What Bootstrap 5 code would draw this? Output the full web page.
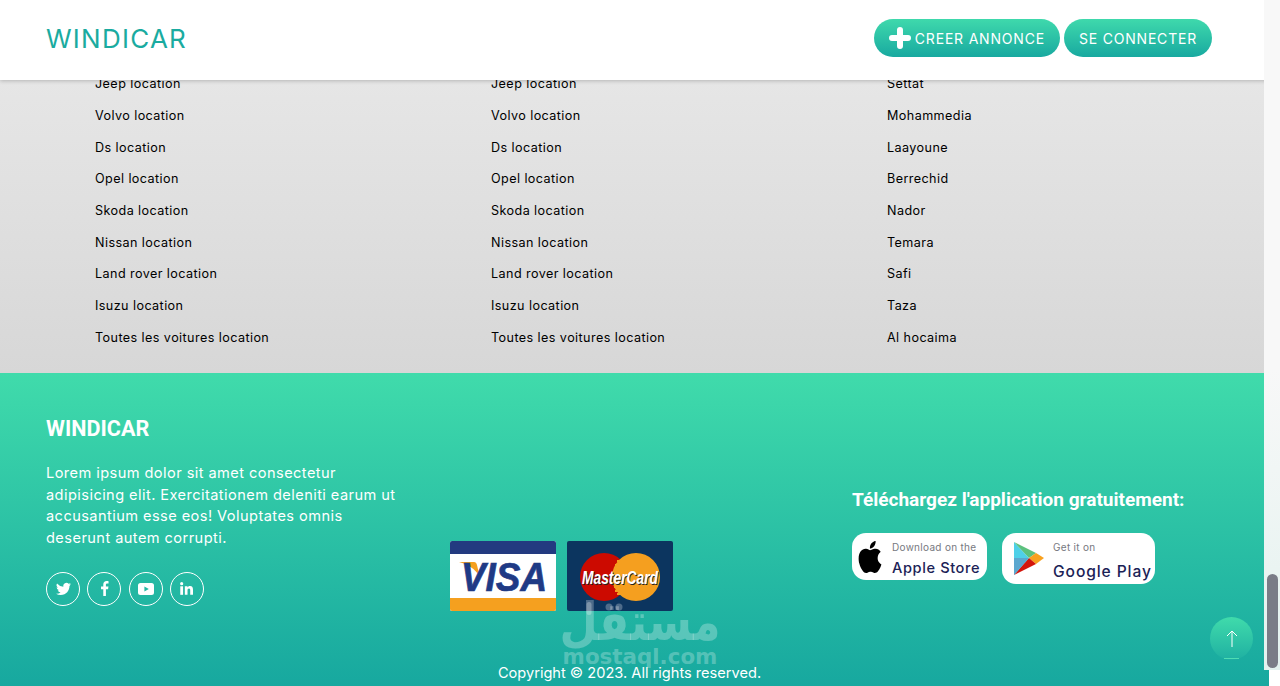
<!DOCTYPE html>
<html lang="fr">
<head>
  <meta charset="UTF-8" />
  <meta name="viewport" content="width=device-width, initial-scale=1.0" />
  <title>Windicar</title>
  <link href="https://cdn.jsdelivr.net/npm/bootstrap@5.3.2/dist/css/bootstrap.min.css" rel="stylesheet">
  <style>
    html, body {
      height: 686px;
      overflow: hidden;
      background-color: #fff;
    }
    body {
      font-family: Inter, "Liberation Sans", sans-serif;
    }
    .page-wrap {
      position: relative;
      width: 1269px;
      height: 686px;
    }
    .top-bar {
      position: relative;
      z-index: 5;
      height: 80px;
      padding: 0 57px 4px 46px;
      background-color: #fff;
      box-shadow: 0 1px 4px rgba(0, 0, 0, 0.22);
    }
    .brand-name {
      padding: 0;
      margin: 1px 0 0;
      font-size: 26px;
      letter-spacing: 1.25px;
      color: #1aaba0;
    }
    .pill-btn {
      height: 38px;
      padding: 0 15px;
      font-size: 14px;
      letter-spacing: 0.8px;
      color: #fff;
      border: 0;
      background: linear-gradient(#3fd9ac, #18a9a0);
    }
    .grey-zone {
      height: 293px;
      background: linear-gradient(#e6e6e6, #d7d7d7);
      padding-left: 95px;
      overflow: hidden;
    }
    .link-grid {
      display: grid;
      grid-template-columns: repeat(3, 396px);
      margin-top: -11.7px;
    }
    .link-grid li {
      height: 31.7px;
      line-height: 31.7px;
      font-size: 12.6px;
      letter-spacing: 0.42px;
      color: #000;
      white-space: nowrap;
    }
    .site-foot {
      position: relative;
      height: 313px;
      color: #fff;
      background: linear-gradient(#40dbab, #17a89f);
    }
    .foot-cols {
      display: grid;
      grid-template-columns: 404px 402px 1fr;
      height: 287px;
      padding-left: 46px;
    }
    .about-col {
      padding-top: 42px;
    }
    .foot-title {
      margin: 0 0 21px;
      font-family: Roboto, sans-serif;
      font-weight: 700;
      font-size: 21.6px;
      line-height: 27px;
    }
    .about-text {
      width: 356px;
      margin: 0 0 22px;
      font-size: 14.6px;
      line-height: 21.7px;
      letter-spacing: 0.43px;
    }
    .social-dot {
      width: 34px;
      height: 34px;
      border: 1px solid #fff;
    }
    .social-row {
      gap: 7.3px;
    }
    .pay-col {
      padding-top: 168px;
      gap: 11px;
    }
    .pay-card {
      width: 106px;
      height: 70px;
      border-radius: 2px;
    }
    .app-col {
      padding-top: 114px;
    }
    .app-title {
      margin: 0 0 21px;
      font-family: Roboto, sans-serif;
      font-weight: 700;
      font-size: 19.05px;
      line-height: 25px;
    }
    .store-row {
      gap: 15px;
    }
    .store-badge {
      background-color: #fff;
      border-radius: 14px;
      font-family: Inter, sans-serif;
      line-height: 1;
    }
    .apple-badge {
      width: 135px;
      height: 47px;
      padding-left: 4px;
    }
    .play-badge {
      width: 153px;
      height: 51px;
      padding-left: 11px;
    }
    .store-words {
      padding-top: 4px;
    }
    .badge-small {
      display: block;
      font-size: 10px;
      letter-spacing: 0.3px;
      color: #77797f;
    }
    .badge-big {
      display: block;
      font-weight: 500;
      font-size: 14.6px;
      letter-spacing: 0.6px;
      color: #1b2256;
    }
    .apple-badge .badge-big {
      margin-top: 9px;
    }
    .play-badge .badge-big {
      margin-top: 12px;
      font-size: 15.6px;
      letter-spacing: 0.9px;
    }
    .copy-line {
      margin: 0;
      padding-right: 10px;
      text-align: center;
      font-size: 14.6px;
      line-height: 26px;
    }
    /* watermark sits over the footer */
    .mostaql-mark {
      position: absolute;
      left: 553px;
      top: 224px;
      width: 174px;
      text-align: center;
      color: rgba(255, 255, 255, 0.27);
      pointer-events: none;
    }
    .mostaql-dots {
      position: absolute;
      left: 0;
      top: 0;
    }
    .mostaql-ar {
      font-family: "DejaVu Sans", sans-serif;
      font-weight: 700;
      font-size: 44px;
      line-height: 50px;
      white-space: nowrap;
      transform: scaleY(1.2);
    }
    .mostaql-en {
      font-family: "DejaVu Sans", sans-serif;
      font-weight: 700;
      font-size: 21.4px;
      line-height: 20px;
      white-space: nowrap;
    }
    .to-top {
      position: absolute;
      left: 1210px;
      top: 244px;
      width: 43px;
      height: 43px;
      background: linear-gradient(#40dbab, #1fb0a2);
    }
    .to-top::after {
      content: "";
      position: absolute;
      left: 14px;
      bottom: 1px;
      width: 15px;
      height: 1px;
      background-color: #4fdcb2;
    }
    .scroll-track {
      position: fixed;
      left: 1264px;
      top: 0;
      z-index: 9;
      width: 16px;
      height: 670px;
      background: linear-gradient(#f8f8f8 55%, #e3f2ef);
    }
    .scroll-thumb {
      position: absolute;
      left: 3px;
      top: 574px;
      width: 11px;
      height: 94px;
      border-radius: 6px;
      background-color: #7a7c87;
    }
  </style>
</head>
<body>
  <div class="page-wrap">
    <nav class="navbar top-bar d-flex justify-content-between align-items-center">
      <a class="navbar-brand brand-name" href="#">WINDICAR</a>
      <div class="d-flex gap-1">
        <button class="btn rounded-pill pill-btn d-flex align-items-center gap-1" type="button">
          <svg width="22" height="22" viewBox="0 0 22 22"><path d="M11 3v16M3 11h16" stroke="#fff" stroke-width="6" stroke-linecap="round"/></svg>
          CREER ANNONCE
        </button>
        <button class="btn rounded-pill pill-btn" type="button">SE CONNECTER</button>
      </div>
    </nav>

    <section class="grey-zone">
      <ul class="list-unstyled link-grid" id="links"></ul>
    </section>

    <footer class="site-foot">
      <div class="foot-cols">
        <div class="about-col">
          <h5 class="foot-title">WINDICAR</h5>
          <p class="about-text">Lorem ipsum dolor sit amet consectetur adipisicing elit. Exercitationem deleniti earum ut accusantium esse eos! Voluptates omnis deserunt autem corrupti.</p>
          <div class="d-flex social-row">
            <a class="social-dot rounded-circle d-flex align-items-center justify-content-center" href="#">
              <svg width="15" height="15" viewBox="0 0 16 16" fill="#fff"><path d="M5.026 15c6.038 0 9.341-5.003 9.341-9.334 0-.14 0-.282-.006-.422A6.685 6.685 0 0 0 16 3.542a6.658 6.658 0 0 1-1.889.518 3.301 3.301 0 0 0 1.447-1.817 6.533 6.533 0 0 1-2.087.793A3.286 3.286 0 0 0 7.875 6.03a9.325 9.325 0 0 1-6.767-3.429 3.289 3.289 0 0 0 1.018 4.382A3.323 3.323 0 0 1 .64 6.575v.045a3.288 3.288 0 0 0 2.632 3.218 3.203 3.203 0 0 1-.865.115 3.23 3.23 0 0 1-.614-.057 3.283 3.283 0 0 0 3.067 2.277A6.588 6.588 0 0 1 .78 13.58a6.32 6.32 0 0 1-.78-.045A9.344 9.344 0 0 0 5.026 15z"/></svg>
            </a>
            <a class="social-dot rounded-circle d-flex align-items-center justify-content-center" href="#">
              <svg width="15" height="15" viewBox="0 0 16 16" fill="#fff"><path d="M9.5 16V8.7h2.3l.4-2.8H9.5V4.1c0-.8.3-1.4 1.4-1.4h1.4V.2C12 .1 11.2 0 10.2 0 8.1 0 6.7 1.3 6.7 3.600v2.300H4.300v2.800h2.400V16z"/></svg>
            </a>
            <a class="social-dot rounded-circle d-flex align-items-center justify-content-center" href="#">
              <svg width="16" height="12" viewBox="0 0 16 12"><path fill="#fff" fill-rule="evenodd" d="M2.500 0h11A2.500 2.500 0 0 1 16 2.500v7a2.500 2.500 0 0 1-2.500 2.500h-11A2.500 2.500 0 0 1 0 9.500v-7A2.500 2.500 0 0 1 2.500 0zM6.400 3.400v5.200L10.800 6z"/></svg>
            </a>
            <a class="social-dot rounded-circle d-flex align-items-center justify-content-center" href="#">
              <svg width="13" height="13" viewBox="0 0 14 14" fill="#fff"><circle cx="1.800" cy="1.800" r="1.700"/><rect x="0.300" y="4.600" width="3" height="9.200"/><path d="M5.200 4.600h2.800v1.300c.5-.9 1.500-1.500 2.800-1.500 2.500 0 3.200 1.600 3.200 3.900v5.500h-3V9c0-1.200-.3-2-1.300-2-1.200 0-1.600.9-1.600 2v4.800h-2.900z"/></svg>
            </a>
          </div>
        </div>

        <div class="pay-col d-flex">
          <svg class="pay-card" viewBox="0 0 106 70">
            <rect width="106" height="70" fill="#fff"/>
            <rect width="106" height="13" fill="#233a80"/>
            <rect y="57" width="106" height="13" fill="#f5a01f"/>
            <path d="M9 21h15c1.500 0 2.500 1 3 3l2.500 11C25 28 18 23 9 21z" fill="#f5a01f"/>
            <text x="54" y="50" text-anchor="middle" font-family="Liberation Sans, sans-serif" font-weight="700" font-style="italic" font-size="40" textLength="86" lengthAdjust="spacingAndGlyphs" fill="#1f3a85" stroke="#1f3a85" stroke-width="0.700">VISA</text>
          </svg>
          <svg class="pay-card" viewBox="0 0 106 70">
            <rect width="106" height="70" fill="#0c355f"/>
            <circle cx="37" cy="36" r="24" fill="#cc0a00"/>
            <circle cx="69" cy="36" r="24" fill="#f59f1f"/>
            <path d="M50 20h6M48 24h10M47 28h12M47 46h12M48 50h10M50 53h6" stroke="#f59f1f" stroke-width="2"/>
            <text x="53" y="43" text-anchor="middle" font-family="Liberation Sans, sans-serif" font-weight="700" font-style="italic" font-size="18" textLength="76" lengthAdjust="spacingAndGlyphs" fill="#222" dx="0.800" dy="0.800">MasterCard</text>
            <text x="53" y="43" text-anchor="middle" font-family="Liberation Sans, sans-serif" font-weight="700" font-style="italic" font-size="18" textLength="76" lengthAdjust="spacingAndGlyphs" fill="#fff">MasterCard</text>
          </svg>
        </div>

        <div class="app-col">
          <h5 class="app-title">Téléchargez l'application gratuitement:</h5>
          <div class="d-flex align-items-start store-row">
            <a class="store-badge apple-badge d-flex align-items-center text-decoration-none" href="#">
              <svg class="me-2" width="28" height="32" viewBox="0 0 16 16" preserveAspectRatio="none" fill="#000"><path d="M11.182.008C11.148-.03 9.923.023 8.857 1.18c-1.066 1.156-.902 2.482-.878 2.516.024.034 1.52.087 2.475-1.258.955-1.345.762-2.391.728-2.43Zm3.314 11.733c-.048-.096-2.325-1.234-2.113-3.422.212-2.189 1.675-2.789 1.698-2.854.023-.065-.597-.79-1.254-1.157a3.692 3.692 0 0 0-1.563-.434c-.108-.003-.483-.095-1.254.116-.508.139-1.653.589-1.968.607-.316.018-1.256-.522-2.267-.665-.647-.125-1.333.131-1.824.328-.49.196-1.422.754-2.074 2.237-.652 1.482-.311 3.83-.067 4.56.244.729.625 1.924 1.273 2.796.576.984 1.34 1.667 1.659 1.899.319.232 1.219.386 1.843.067.502-.308 1.408-.485 1.766-.472.357.013 1.061.154 1.782.539.571.197 1.111.115 1.652-.105.541-.221 1.324-1.059 2.238-2.758.347-.79.505-1.217.473-1.282Z"/></svg>
              <span class="store-words">
                <span class="badge-small">Download on the</span>
                <span class="badge-big">Apple Store</span>
              </span>
            </a>
            <a class="store-badge play-badge d-flex align-items-center text-decoration-none" href="#">
              <svg class="me-2" width="32" height="35" viewBox="0 0 32 35">
                <path d="M1 1l15 16L1 34z" fill="#4ed0e8"/>
                <path d="M1 1l22 11-7 5z" fill="#5cc17e"/>
                <path d="M23 12l8 5-8 6-7-6z" fill="#f9a11e"/>
                <path d="M1 34l15-17 7 6z" fill="#d3150c"/>
                <path d="M1 17h15L1 34z" fill="#5ba7cf"/>
              </svg>
              <span class="store-words">
                <span class="badge-small">Get it on</span>
                <span class="badge-big">Google Play</span>
              </span>
            </a>
          </div>
        </div>
      </div>
      <p class="copy-line">Copyright © 2023. All rights reserved.</p>

      <div class="mostaql-mark">
        <svg class="mostaql-dots" width="174" height="20" viewBox="0 0 174 20" fill="currentColor"><rect x="33.500" y="5" width="5" height="13" rx="2.500"/><circle cx="56" cy="10" r="3.500"/><circle cx="66" cy="10" r="3.500"/></svg>
        <div class="mostaql-ar" dir="rtl">مستقل</div>
        <div class="mostaql-en">mostaql.com</div>
      </div>

      <a class="to-top rounded-circle d-flex align-items-center justify-content-center" href="#">
        <svg width="12" height="17" viewBox="0 0 12 17" fill="none" stroke="#fff"><path d="M6 17V1M1 6l5-5 5 5"/></svg>
      </a>
    </footer>
  </div>

  <div class="scroll-track"><div class="scroll-thumb"></div></div>

  <script src="https://cdn.jsdelivr.net/npm/bootstrap@5.3.2/dist/js/bootstrap.bundle.min.js"></script>
  <script>
    const cars = ["Jeep", "Volvo", "Ds", "Opel", "Skoda", "Nissan", "Land rover", "Isuzu", "Toutes les voitures"];
    const cities = ["Settat", "Mohammedia", "Laayoune", "Berrechid", "Nador", "Temara", "Safi", "Taza", "Al hocaima"];
    let html = "";
    cars.forEach(function (car, i) {
      html += "<li>" + car + " location</li><li>" + car + " location</li><li>" + cities[i] + "</li>";
    });
    document.getElementById("links").innerHTML = html;
  </script>
</body>
</html>
